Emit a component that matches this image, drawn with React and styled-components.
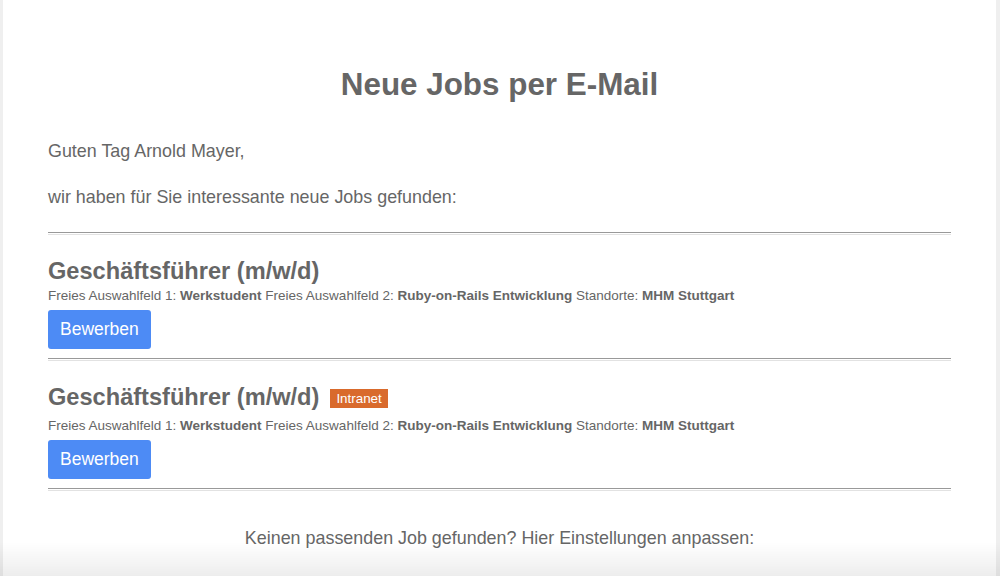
import styled, { createGlobalStyle } from 'styled-components'

const GlobalStyle = createGlobalStyle`
  body {
    margin: 0;
    background: #efefef;
    font-family: "Liberation Sans", Arial, sans-serif;
    color: #666;
  }
`

const Card = styled.div`
  background: #fff;
  margin: 0 4px 0 3px;
  min-height: 576px;
  padding: 67px 45px 40px 45px;
  box-sizing: border-box;
`

const Heading = styled.h1`
  margin: 0 0 38px;
  text-align: center;
  font-size: 31.4px;
  line-height: 36px;
  font-weight: bold;
  color: #666;
`

const Para = styled.p`
  margin: 0 0 ${props => props.gap || 0}px;
  font-size: 17.9px;
  line-height: 20px;
  color: #666;
  text-align: ${props => props.center ? 'center' : 'left'};
`

const Rule = styled.hr`
  margin: 0;
  height: 1px;
  border: none;
  border-top: 1px solid #999;
  border-bottom: 1px solid #e2e2e2;
`

const Job = styled.div`
  padding: 23px 0 9px;
`

const TitleRow = styled.div`
  display: flex;
  align-items: flex-start;
  gap: 11px;
  margin-bottom: ${props => props.badge ? 8 : 4}px;
`

const Title = styled.h2`
  margin: 0;
  font-size: 23.6px;
  line-height: 26px;
  font-weight: bold;
  color: #666;
`

const Badge = styled.span`
  background: #d96a2c;
  color: #fff;
  font-size: 13.4px;
  line-height: 19px;
  padding: 0 6px;
  margin-top: 5px;
`

const Meta = styled.div`
  font-size: 13.5px;
  line-height: 16px;
  color: #666;
  margin-bottom: 6px;

  b {
    font-weight: bold;
  }
`

const Button = styled.a`
  display: inline-block;
  background: #4d8bf5;
  color: #fff;
  font-size: 17.5px;
  line-height: 39px;
  height: 39px;
  padding: 0 12px;
  border-radius: 3px;
  text-decoration: none;
`

const Footer = styled(Para)`
  margin-top: 37px;
`

const Fade = styled.div`
  position: fixed;
  left: 0;
  right: 0;
  bottom: 0;
  height: 34px;
  pointer-events: none;
  background: linear-gradient(rgba(0,0,0,0), rgba(0,0,0,0.07));
`

const jobs = [
  { id: 1, title: 'Geschäftsführer (m/w/d)', badge: null },
  { id: 2, title: 'Geschäftsführer (m/w/d)', badge: 'Intranet' },
]

const App = () => {
  return (
    <>
      <GlobalStyle />
      <Card>
        <Heading>Neue Jobs per E-Mail</Heading>
        <Para gap={26}>Guten Tag Arnold Mayer,</Para>
        <Para gap={25}>wir haben für Sie interessante neue Jobs gefunden:</Para>
        <Rule />
        {jobs.map(job => (
          <div key={job.id}>
            <Job>
              <TitleRow badge={!!job.badge}>
                <Title>{job.title}</Title>
                {job.badge && <Badge>{job.badge}</Badge>}
              </TitleRow>
              <Meta>
                Freies Auswahlfeld 1: <b>Werkstudent</b> Freies Auswahlfeld 2: <b>Ruby-on-Rails Entwicklung</b> Standorte: <b>MHM Stuttgart</b>
              </Meta>
              <Button href="#">Bewerben</Button>
            </Job>
            <Rule />
          </div>
        ))}
        <Footer center>Keinen passenden Job gefunden? Hier Einstellungen anpassen:</Footer>
      </Card>
      <Fade />
    </>
  )
}

export default App
